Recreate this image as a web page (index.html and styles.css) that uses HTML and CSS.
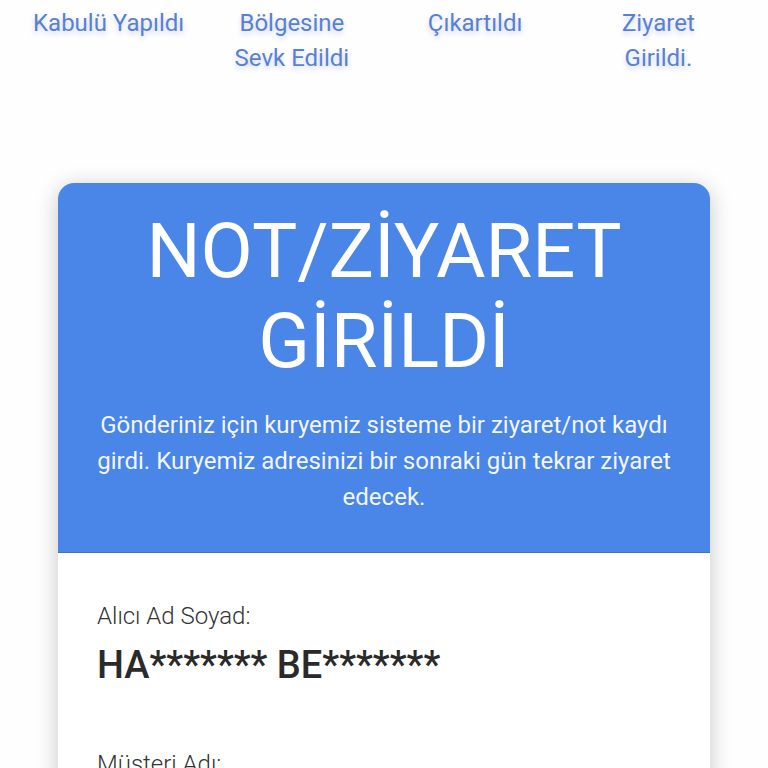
FILE: index.html
```html
<!DOCTYPE html>
<html lang="tr">
<head>
<meta charset="utf-8">
<link rel="stylesheet" href="styles.css">
</head>
<body>
<div class="steps">
  <div class="step">Kabulü Yapıldı</div>
  <div class="step">Bölgesine<br>Sevk Edildi</div>
  <div class="step">Çıkartıldı</div>
  <div class="step">Ziyaret<br>Girildi.</div>
</div>
<div class="card">
  <div class="card-head">
    <h1 class="title">NOT/ZİYARET GİRİLDİ</h1>
    <p class="desc">Gönderiniz için kuryemiz sisteme bir ziyaret/not kaydı girdi. Kuryemiz adresinizi bir sonraki gün tekrar ziyaret edecek.</p>
  </div>
  <div class="card-body">
    <div class="label">Alıcı Ad Soyad:</div>
    <div class="value">HA******* BE*******</div>
    <div class="label label-next">Müşteri Adı:</div>
    <div class="value">&nbsp;</div>
  </div>
</div>
</body>
</html>
```

FILE: styles.css
```css
html, body {
  margin: 0;
  padding: 0;
  background: #fefefe;
  font-family: Roboto, "Noto Sans", "Liberation Sans", sans-serif;
}
body {
  height: 768px;
  overflow: hidden;
}
.steps {
  display: grid;
  grid-template-columns: repeat(4, 1fr);
  padding: 6px 18px 0 17px;
}
.step {
  text-align: center;
  font-size: 24px;
  line-height: 35px;
  color: #5a80d4;
  text-shadow: 0 3px 5px rgba(90, 128, 212, 0.3);
}
.card {
  margin: 107px 58px 0 58px;
  border-radius: 16px;
  background: #fff;
  box-shadow: 0 4px 22px rgba(0, 0, 0, 0.22);
  overflow: hidden;
}
.card-head {
  background: #4a86e8;
  border-bottom: 1px solid #3f73c9;
  padding: 23px 36px 37px;
  text-align: center;
  color: #fff;
}
.title {
  margin: 0 auto;
  max-width: 500px;
  font-size: 76px;
  font-weight: 400;
  line-height: 90px;
}
.desc {
  margin: 21px 0 0;
  font-size: 24px;
  line-height: 36px;
  color: rgba(255, 255, 255, 0.95);
}
.card-body {
  padding: 48px 39px 40px;
  color: #333;
}
.label {
  font-size: 24px;
  font-weight: 300;
  line-height: 30px;
  color: #333;
}
.value {
  margin-top: 11px;
  font-size: 38px;
  font-weight: 500;
  line-height: 46px;
  color: #2a2a2a;
}
.label-next {
  margin-top: 61px;
}
```
